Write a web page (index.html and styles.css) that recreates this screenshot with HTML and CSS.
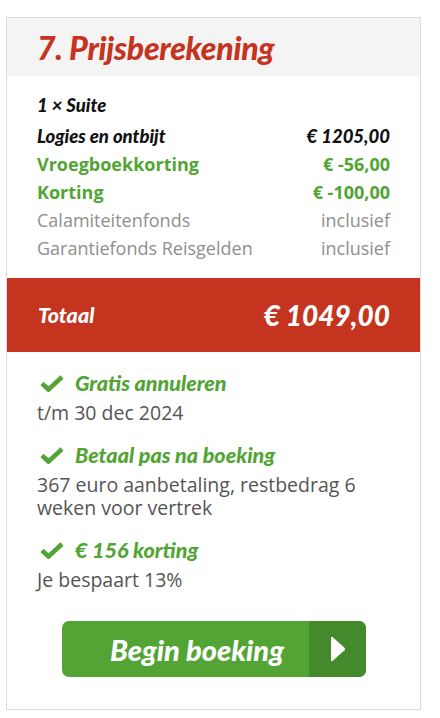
FILE: index.html
```html
<!DOCTYPE html>
<html lang="nl">
<head>
  <meta charset="UTF-8">
  <meta name="viewport" content="width=device-width, initial-scale=1.0">
  <title>Prijsberekening</title>
  <link rel="stylesheet" href="styles.css">
</head>
<body>

  <div class="price-card">
    <!-- kop -->
    <div class="price-head">
      <h2>7. Prijsberekening</h2>
    </div>

    <!-- regels -->
    <div class="price-lines">
      <div class="line room">1 × Suite</div>
      <div class="line dark"><span>Logies en ontbijt</span><span>€ 1205,00</span></div>
      <div class="line green"><span>Vroegboekkorting</span><span>€ -56,00</span></div>
      <div class="line green"><span>Korting</span><span>€ -100,00</span></div>
      <div class="line muted"><span>Calamiteitenfonds</span><span>inclusief</span></div>
      <div class="line muted"><span>Garantiefonds Reisgelden</span><span>inclusief</span></div>
    </div>

    <!-- totaal -->
    <div class="price-total">
      <span class="total-label">Totaal</span>
      <span class="total-amount">€ 1049,00</span>
    </div>

    <!-- voordelen -->
    <div class="perks">
      <div class="perk">
        <div class="perk-title">
          <svg class="check" viewBox="0 0 24 17"><path d="M2 8.5 L8.5 14.5 L22 2" fill="none" stroke="currentColor" stroke-width="4.6" stroke-linejoin="miter"/></svg>
          Gratis annuleren
        </div>
        <div class="perk-text">t/m 30 dec 2024</div>
      </div>
      <div class="perk">
        <div class="perk-title">
          <svg class="check" viewBox="0 0 24 17"><path d="M2 8.5 L8.5 14.5 L22 2" fill="none" stroke="currentColor" stroke-width="4.6" stroke-linejoin="miter"/></svg>
          Betaal pas na boeking
        </div>
        <div class="perk-text">367 euro aanbetaling, restbedrag 6 weken voor vertrek</div>
      </div>
      <div class="perk">
        <div class="perk-title">
          <svg class="check" viewBox="0 0 24 17"><path d="M2 8.5 L8.5 14.5 L22 2" fill="none" stroke="currentColor" stroke-width="4.6" stroke-linejoin="miter"/></svg>
          € 156 korting
        </div>
        <div class="perk-text">Je bespaart 13%</div>
      </div>
    </div>

    <!-- knop -->
    <button class="btn-book">
      <span class="btn-label">Begin boeking</span>
      <span class="btn-arrow">
        <svg viewBox="0 0 16 28"><path d="M2.5 2 Q1 1 1 3 L1 25 Q1 27 2.5 26 L14.5 15.2 Q15.6 14 14.5 12.8 Z" fill="#fff"/></svg>
      </span>
    </button>
  </div>

</body>
</html>
```

FILE: styles.css
```css
body {
  margin: 0;
  padding: 0;
  background: #ffffff;
  font-family: 'Open Sans', sans-serif;
}

/* kaart */
.price-card {
  width: 413px;
  margin: 17px 0 0 6px;
  border: 1px solid #dcdcdc;
  padding-bottom: 32px;
}

.price-head {
  background: #f4f4f4;
  height: 58px;
  padding-left: 30px;
  display: flex;
  align-items: center;
}

.price-head h2 {
  margin: 0;
  font-family: 'Lato', sans-serif;
  font-weight: 900;
  font-style: italic;
  font-size: 32px;
  color: #c4341f;
  letter-spacing: -0.3px;
}

/* regels */
.price-lines {
  padding: 15px 30px 16px 30px;
}

.line {
  display: flex;
  justify-content: space-between;
  height: 28px;
  line-height: 28px;
  font-size: 18px;
}

.line.room {
  margin-bottom: 3px;
}

.line.room,
.line.dark {
  font-family: 'Lato', sans-serif;
  font-weight: 900;
  font-style: italic;
  font-size: 18.5px;
  color: #111111;
}

.line.green {
  font-weight: 700;
  color: #52a435;
  font-size: 18px;
}

.line.muted {
  color: #8f8f8f;
}

/* totaal */
.price-total {
  background: #c4341f;
  height: 74px;
  padding: 0 30px 0 31px;
  display: flex;
  align-items: center;
  justify-content: space-between;
  color: #ffffff;
  font-family: 'Lato', sans-serif;
  font-weight: 900;
  font-style: italic;
}

.total-label {
  font-size: 21.5px;
}

.total-amount {
  font-size: 28px;
}

/* voordelen */
.perks {
  padding: 17px 30px 0 30px;
}

.perk {
  margin-bottom: 17px;
}

.perk-title {
  display: flex;
  align-items: center;
  height: 28px;
  font-family: 'Lato', sans-serif;
  font-weight: 900;
  font-style: italic;
  font-size: 21.5px;
  color: #52a435;
}

.check {
  width: 24px;
  height: 17px;
  margin: 0 11px 0 3px;
  color: #52a435;
}

.perk-text {
  margin-top: 4px;
  font-size: 19.5px;
  line-height: 23px;
  color: #555555;
}

/* knop */
.btn-book {
  display: flex;
  width: 304px;
  height: 56px;
  margin: 30px 0 0 55px;
  padding: 0;
  border: none;
  border-radius: 7px;
  overflow: hidden;
  background: #52a435;
  cursor: pointer;
}

.btn-label {
  flex: 1;
  display: flex;
  align-items: center;
  justify-content: center;
  padding-left: 23px;
  color: #ffffff;
  font-family: 'Lato', sans-serif;
  font-weight: 900;
  font-style: italic;
  font-size: 29px;
}

.btn-arrow {
  width: 57px;
  display: flex;
  align-items: center;
  justify-content: center;
  background: #448a2d;
}

.btn-arrow svg {
  width: 16px;
  height: 28px;
}
```
